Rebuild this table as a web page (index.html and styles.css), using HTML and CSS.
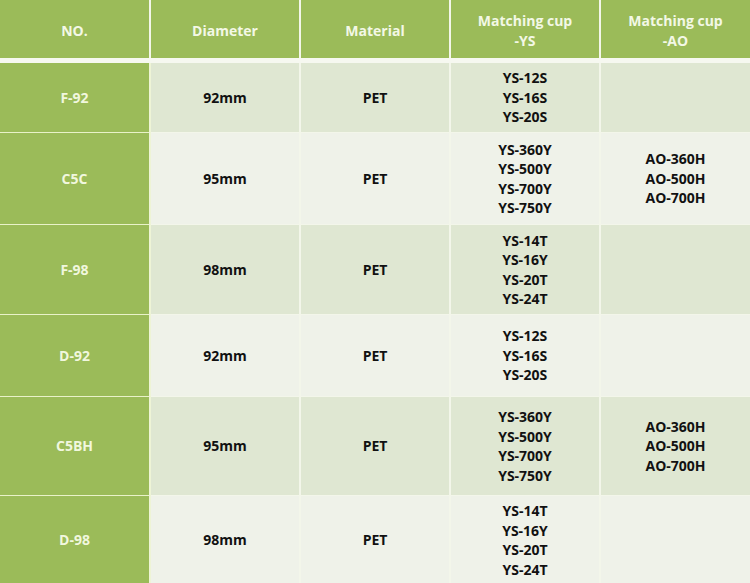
FILE: index.html
```html
<!DOCTYPE html>
<html>
<head>
<meta charset="utf-8">
<link rel="stylesheet" href="styles.css">
</head>
<body>
<table class="spec">
  <colgroup>
    <col class="c"><col class="c"><col class="c"><col class="c"><col class="c">
  </colgroup>
  <thead>
    <tr class="head">
      <th>NO.</th>
      <th>Diameter</th>
      <th>Material</th>
      <th>Matching cup<br>-YS</th>
      <th>Matching cup<br>-AO</th>
    </tr>
  </thead>
  <tbody>
    <tr class="r1 odd">
      <td class="no">F-92</td><td>92mm</td><td>PET</td>
      <td>YS-12S<br>YS-16S<br>YS-20S</td><td></td>
    </tr>
    <tr class="r2 even">
      <td class="no">C5C</td><td>95mm</td><td>PET</td>
      <td>YS-360Y<br>YS-500Y<br>YS-700Y<br>YS-750Y</td><td>AO-360H<br>AO-500H<br>AO-700H</td>
    </tr>
    <tr class="r3 odd">
      <td class="no">F-98</td><td>98mm</td><td>PET</td>
      <td>YS-14T<br>YS-16Y<br>YS-20T<br>YS-24T</td><td></td>
    </tr>
    <tr class="r4 even">
      <td class="no">D-92</td><td>92mm</td><td>PET</td>
      <td>YS-12S<br>YS-16S<br>YS-20S</td><td></td>
    </tr>
    <tr class="r5 odd">
      <td class="no">C5BH</td><td>95mm</td><td>PET</td>
      <td>YS-360Y<br>YS-500Y<br>YS-700Y<br>YS-750Y</td><td>AO-360H<br>AO-500H<br>AO-700H</td>
    </tr>
    <tr class="r6 even">
      <td class="no">D-98</td><td>98mm</td><td>PET</td>
      <td>YS-14T<br>YS-16Y<br>YS-20T<br>YS-24T</td><td></td>
    </tr>
  </tbody>
</table>
</body>
</html>
```

FILE: styles.css
```css
html, body {
  margin: 0;
  padding: 0;
  background: #f3f6ec;
}
.spec {
  width: 750px;
  border-collapse: collapse;
  table-layout: fixed;
  font-family: "Open Sans", "Liberation Sans", sans-serif;
  font-weight: 700;
  font-size: 14px;
  line-height: 19.5px;
  color: #111;
}
.spec col.c { width: 150px; }
.spec th, .spec td {
  padding: 0;
  text-align: center;
  vertical-align: middle;
  border-left: 2px solid #f3f6ea;
  border-right: 2px solid #f3f6ea;
  border-top: 1px solid #f3f6ea;
  border-bottom: 1px solid #f3f6ea;
}
.spec th:first-child, .spec td:first-child { border-left: none; }
.spec th:last-child, .spec td:last-child { border-right: none; }
.head th {
  background: #9bbb59;
  color: #f3f8e6;
  font-weight: 700;
  height: 54px;
  line-height: 20px;
  border-top: none;
  border-bottom: 5px solid #f6f8f0;
  padding-top: 4px;
}
.spec td.no {
  background: #9bbb59;
  color: #f1f7de;
  border-top-color: #e9f2c9;
  border-bottom-color: #e9f2c9;
  border-right-color: #eef4d6;
}
.odd td { background: #dfe7d2; }
.even td { background: #eff2e9; }
.r1 td { height: 69px; }
.r2 td { height: 91px; }
.r3 td { height: 89px; }
.r4 td { height: 81px; }
.r5 td { height: 98px; }
.r6 td { height: 88px; border-bottom: none; }
```
